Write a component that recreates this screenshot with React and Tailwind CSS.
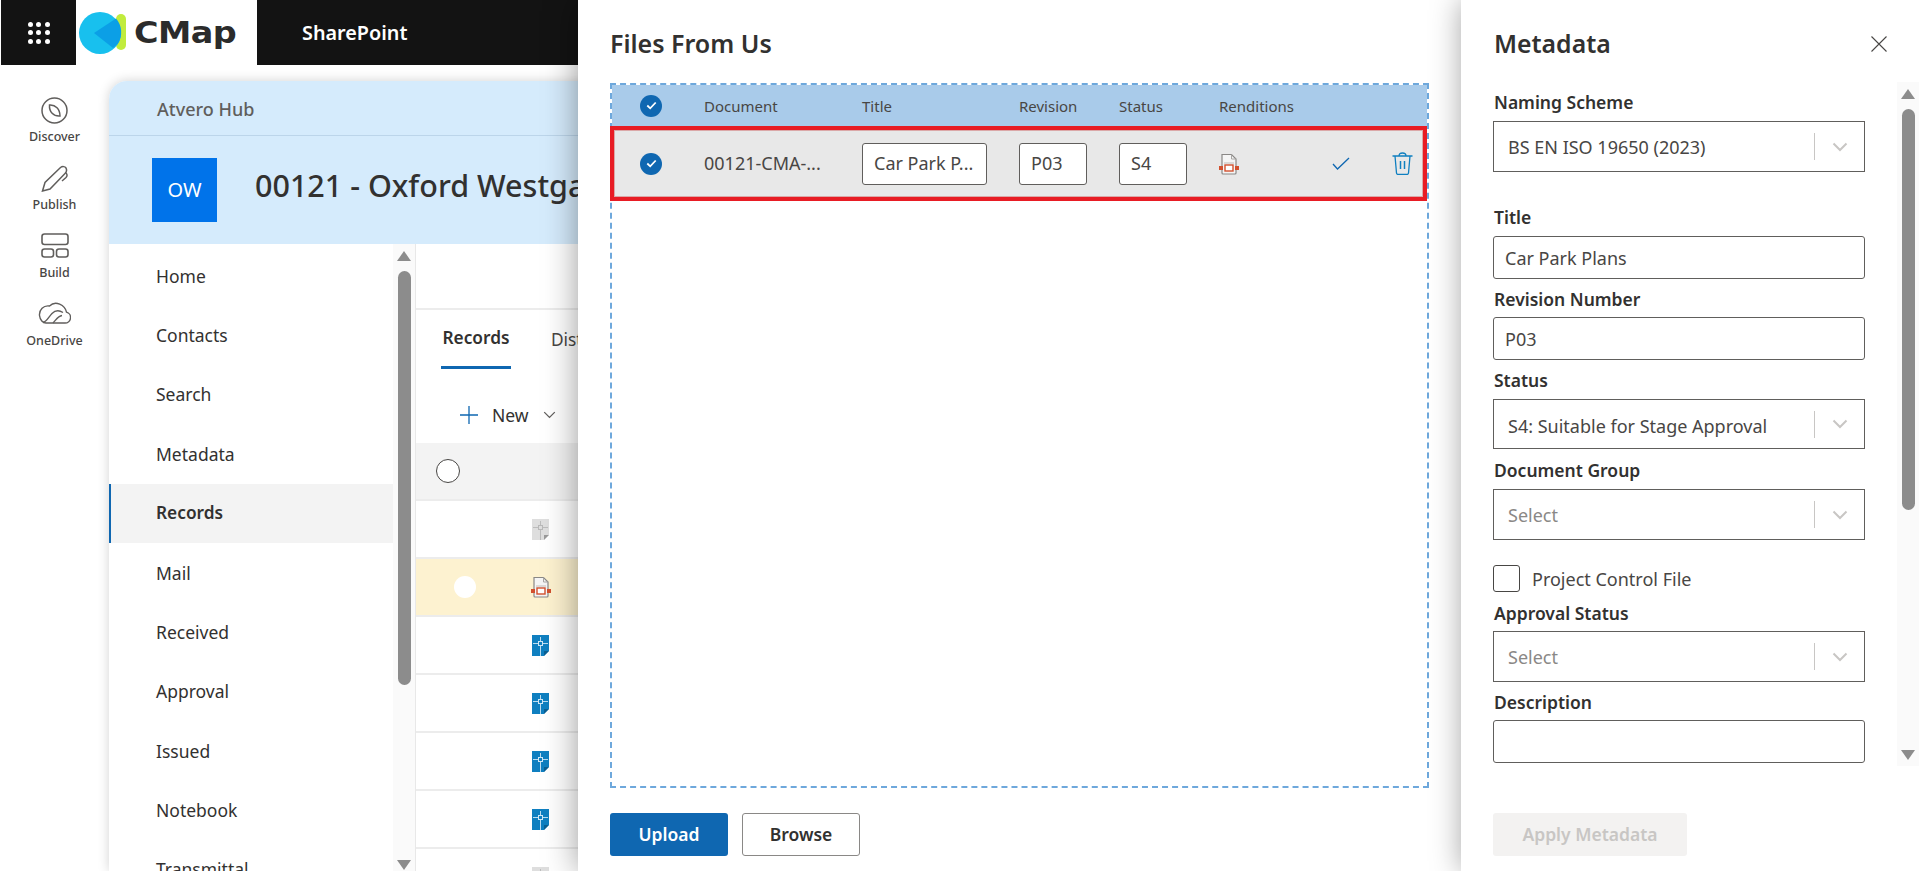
import React from "react";

const FONT = "font-['Noto_Sans','Open_Sans',sans-serif]";

function FileIcon({ tone }) {
  if (tone === "red") {
    return (
      <svg width="20" height="22" viewBox="0 0 20 22" fill="none">
        <path d="M3 1.500h9.500l4.500 4.500v14a1 1 0 0 1-1 1H4a1 1 0 0 1-1-1z" fill="#f5f5f5" stroke="#8a8886" strokeWidth="1.200" />
        <path d="M12.500 1.500v4.500H17" fill="none" stroke="#a8a6a4" strokeWidth="1" />
        <path d="M5 10h10" stroke="#c8c6c4" strokeWidth="1.200" />
        <rect x="0" y="13" width="4" height="4" fill="#d2502e" />
        <rect x="16" y="13" width="4" height="4" fill="#d2502e" />
        <rect x="6" y="12" width="8" height="6" fill="#fff" stroke="#d2502e" strokeWidth="1.400" />
      </svg>
    );
  }
  const bg = tone === "blue" ? "#0f7fc0" : "#dedede";
  const line = tone === "blue" ? "#cfe6f5" : "#b8b8b8";
  return (
    <svg width="17" height="21" viewBox="0 0 17 21" fill="none">
      <path d="M0 0h17v16l-5 5H0z" fill={bg} />
      <path d="M1 8.500h15M8.500 2v19" stroke={line} strokeWidth="0.900" />
      <rect x="6.500" y="6.500" width="4" height="4" fill={bg} stroke={line} strokeWidth="1" />
      <path d="M17 16l-5 5v-5z" fill={tone === "blue" ? "#0b5f92" : "#9a9a9a"} />
      <path d="M17 16.500l-4.500 4.500h4.500z" fill="#ffffff" />
    </svg>
  );
}

function Chevron({ cls = "", color = "#c8c6c4", w = 16, sw = "2" }) {
  return (
    <svg className={cls} width={w} height="10" viewBox="0 0 16 10" fill="none">
      <path d="M1.500 1.500L8 8l6.500-6.500" stroke={color} strokeWidth={sw} />
    </svg>
  );
}

function CheckCircle() {
  return (
    <div className="w-[22px] h-[22px] rounded-full bg-[#0f67b1] flex items-center justify-center">
      <svg width="11" height="9" viewBox="0 0 11 9" fill="none">
        <path d="M1.300 4.500L4.200 7.300L9.700 1.500" stroke="#fff" strokeWidth="1.800" />
      </svg>
    </div>
  );
}

function RailItem({ icon, label }) {
  return (
    <div className="h-[68px] flex flex-col items-center">
      <div className="h-[32px] flex items-start justify-center">{icon}</div>
      <div className="h-[16px] leading-[16px] text-[12.500px] font-medium text-[#484644]">{label}</div>
    </div>
  );
}

const NAV = ["Home", "Contacts", "Search", "Metadata", "Records", "Mail", "Received", "Approval", "Issued", "Notebook", "Transmittal"];
const ROWS = ["gray", "red", "blue", "blue", "blue", "blue", "gray"];

function Label({ h, children }) {
  return (
    <div className={`flex items-center pl-px text-[17.500px] font-semibold text-[#323130] leading-[20px] ${h}`}>{children}</div>
  );
}

function Select({ h, value, placeholder, low }) {
  return (
    <div className={`${h} w-[372px] border-[1.500px] border-[#605e5c] bg-white flex items-center`}>
      <div className={`flex-1 pl-[14px] ${low ? "pt-[4px]" : "pt-[1px]"} text-[18px] ${placeholder ? "text-[#8a8886]" : "text-[#484644]"}`}>{value}</div>
      <div className="h-[27px] w-px bg-[#c8c6c4]"></div>
      <div className="w-[49px] flex items-center justify-center">
        <Chevron />
      </div>
    </div>
  );
}

function TextBox({ value }) {
  return (
    <div className="h-[43px] w-[372px] border-[1.500px] border-[#605e5c] rounded-[3px] bg-white flex items-center pl-[11px] pt-[1px] text-[18px] text-[#484644]">
      {value}
    </div>
  );
}

function ScrollUp({ cls }) {
  return <div className={`w-0 h-0 border-x-[7px] border-x-transparent border-b-[10px] border-b-[#8c8c8c] ${cls}`}></div>;
}
function ScrollDown({ cls }) {
  return <div className={`w-0 h-0 border-x-[7px] border-x-transparent border-t-[10px] border-t-[#8c8c8c] ${cls}`}></div>;
}

export default function App() {
  return (
    <div className={`relative w-[1919px] h-[871px] overflow-hidden bg-white ${FONT} flex flex-col`}>
      {/* top bar */}
      <div className="h-[65px] shrink-0 flex items-stretch pl-px">
        <div className="w-[75px] bg-[#131313] flex items-center justify-center">
          <div className="grid grid-cols-3 gap-[3.500px]">
            {[0, 1, 2, 3, 4, 5, 6, 7, 8].map((i) => (
              <div key={i} className="w-[5px] h-[5px] rounded-full bg-white"></div>
            ))}
          </div>
        </div>
        <div className="w-[181px] bg-white flex items-center pl-[3px]">
          <svg width="50" height="46" viewBox="0 0 50 46" fill="none" className="shrink-0">
            <rect x="37" y="4" width="10" height="36" rx="5" fill="#c1ec3d" />
            <circle cx="21" cy="23" r="21" fill="#18c0ee" />
            <path d="M15 23L37 8.500a21 21 0 0 1 2 25L34 38z" fill="#0b9fe6" />
          </svg>
          <div className="ml-[5px] origin-left scale-x-[1.080] font-['DejaVu_Sans',sans-serif] font-bold text-[31px] tracking-[-0.500px] text-[#2b2b2b]">CMap</div>
        </div>
        <div className="flex-1 bg-[#131313] flex items-center pl-[45px] text-white text-[19.800px] font-semibold">SharePoint</div>
      </div>

      {/* body */}
      <div className="flex-1 flex min-h-0">
        <div className="w-[109px] shrink-0 pt-[32px]">
          <RailItem
            label="Discover"
            icon={
              <svg width="27" height="27" viewBox="0 0 27 27" fill="none" stroke="#605e5c" strokeWidth="1.500">
                <circle cx="13.500" cy="13.500" r="12.500" />
                <path d="M8.500 8c6-.5 10.500 4 10.500 11-6.500.5-11-4-10.500-11z" />
              </svg>
            }
          />
          <RailItem
            label="Publish"
            icon={
              <svg width="28" height="27" viewBox="0 0 28 27" fill="none" stroke="#605e5c" strokeWidth="1.500">
                <path d="M1.500 26L4 17.500 19.500 2.500c2-1.500 4.500-1 5.500.5 1 2 .5 4-1 5.500L9 24z" />
                <path d="M24.500 7.500c2 1.500 2 3.500.5 5L21 16" />
              </svg>
            }
          />
          <RailItem
            label="Build"
            icon={
              <svg width="28" height="25" viewBox="0 0 28 25" fill="none" stroke="#605e5c" strokeWidth="1.600">
                <rect x="1" y="1" width="26" height="10.500" rx="2.500" />
                <rect x="1" y="16" width="11.500" height="8" rx="2.500" />
                <rect x="15.500" y="16" width="11.500" height="8" rx="2.500" />
              </svg>
            }
          />
          <RailItem
            label="OneDrive"
            icon={
              <svg width="33" height="23" viewBox="0 0 33 23" fill="none" stroke="#605e5c" strokeWidth="1.400">
                <path d="M8 22h19a5.500 5.500 0 0 0 1.500-10.800C27 4 17.500-1 11.500 5 5.500 4 1 9 1.500 14.500 2 19 5 22 8 22z" />
                <path d="M5 21.500c4-1 6-6 9-9s7-3.500 11-1" />
                <path d="M15 22c3-3 5-7 9-7.500" />
              </svg>
            }
          />
        </div>

        {/* card */}
        <div className="flex-1 mt-[16px] rounded-tl-[18px] shadow-[0_0_12px_rgba(0,0,0,0.18)] flex flex-col min-w-0">
          <div className="h-[55px] shrink-0 bg-[#d5ebfc] rounded-tl-[18px] border-b border-[#bcd5ea] flex items-center pl-[48px] pt-[2px] text-[18px] font-medium text-[#605e5c]">
            Atvero Hub
          </div>
          <div className="h-[108px] shrink-0 bg-[#d5ebfc] flex items-center pl-[43px]">
            <div className="w-[65px] h-[64px] bg-[#0073ea] text-white text-[20px] flex items-center justify-center">OW</div>
            <div className="ml-[38px] text-[30.500px] font-medium text-[#323130] whitespace-nowrap -mt-[8px]">00121 - Oxford Westgate</div>
          </div>
          <div className="flex-1 flex min-h-0">
            <div className="w-[284px] shrink-0 pt-[2px]">
              {NAV.map((n) => (
                <div
                  key={n}
                  className={
                    n === "Records"
                      ? "h-[59.400px] flex items-center pl-[45px] bg-[#f3f3f3] border-l-2 border-[#0f67b1] text-[17.300px] font-semibold text-[#323130]"
                      : "h-[59.400px] flex items-center pl-[47px] text-[17.500px] text-[#323130]"
                  }
                >
                  {n}
                </div>
              ))}
            </div>
            <div className="w-[22px] shrink-0 bg-[#fafafa] flex flex-col items-center pt-[7px] pb-[1px] border-r border-[#e8e8e8] box-content">
              <ScrollUp cls="shrink-0" />
              <div className="w-[13px] h-[414px] mt-[10px] rounded-full bg-[#8c8c8c] shrink-0"></div>
              <div className="flex-1"></div>
              <ScrollDown cls="shrink-0" />
            </div>
            <div className="flex-1 min-w-0 flex flex-col">
              <div className="h-[66px] shrink-0 border-b-2 border-[#ececec]"></div>
              <div className="h-[59px] shrink-0 flex pl-[25px] text-[17.300px]">
                <div className="w-[70px] h-[59px] border-b-[3px] border-[#0f67b1] flex items-center justify-center font-semibold text-[#323130]">Records</div>
                <div className="ml-[40px] h-[59px] flex items-center text-[#484644]">Distribution</div>
              </div>
              <div className="h-[74px] shrink-0 flex items-center pl-[44px] pt-[18px] text-[17.500px] text-[#323130]">
                <svg width="18" height="18" viewBox="0 0 18 18" fill="none" stroke="#0f67b1" strokeWidth="1.300">
                  <path d="M9 0v18M0 9h18" />
                </svg>
                <span className="ml-[14px]">New</span>
                <Chevron cls="ml-[14px]" color="#605e5c" w={13} sw="1.600" />
              </div>
              <div className="h-[58px] shrink-0 bg-[#f3f3f3] border-b-2 border-[#ececec] flex items-center pl-[20px]">
                <div className="w-[24px] h-[24px] rounded-full border-[1.500px] border-[#484644] bg-white"></div>
              </div>
              {ROWS.map((t, i) => (
                <div
                  key={i}
                  className={`h-[58px] shrink-0 border-b-2 border-[#ececec] flex items-center ${t === "red" ? "bg-[#fdf2d0]" : "bg-white"}`}
                >
                  {t === "red" ? <div className="ml-[38px] w-[22px] h-[22px] rounded-full bg-white shrink-0"></div> : <div className="ml-[60px]"></div>}
                  <div className={t === "red" ? "ml-[55px]" : "ml-[56px]"}>
                    <FileIcon tone={t} />
                  </div>
                </div>
              ))}
            </div>
          </div>
        </div>
      </div>

      {/* sliding panels */}
      <div className="absolute top-0 right-0 bottom-0 flex">
        <div className="w-[883px] bg-white shadow-[0_0_32px_rgba(0,0,0,0.4)] pl-[32px] flex flex-col">
          <div className="h-[83px] shrink-0 flex items-start pt-[26px] leading-[34px] text-[25px] font-semibold text-[#323130]">Files From Us</div>
          <div className="w-[819px] h-[705px] shrink-0 border-2 border-dashed border-[#6ea8dc]">
            <div className="h-[41px] bg-[#a9cbea] flex items-center text-[15px] text-[#484644]">
              <div className="w-[92px] pl-[28px]">
                <CheckCircle />
              </div>
              <div className="w-[158px] pt-[1px]">Document</div>
              <div className="w-[157px] pt-[1px]">Title</div>
              <div className="w-[100px] pt-[1px]">Revision</div>
              <div className="w-[100px] pt-[1px]">Status</div>
              <div className="pt-[1px]">Renditions</div>
            </div>
            <div className="-ml-[2px] w-[817px] h-[75px] border-4 border-[#e81c24] bg-[#e8e8e8] shadow-[inset_0_0_0_1px_#dba8a8] flex items-center text-[18px] text-[#484644]">
              <div className="w-[90px] pl-[26px]"><CheckCircle /></div>
              <div className="w-[158px] whitespace-nowrap">00121-CMA-...</div>
              <div className="w-[157px]">
                <div className="w-[125px] h-[42px] bg-white border-[1.500px] border-[#605e5c] rounded-[3px] flex items-center pl-[11px] whitespace-nowrap overflow-hidden">Car Park P...</div>
              </div>
              <div className="w-[100px]">
                <div className="w-[68px] h-[42px] bg-white border-[1.500px] border-[#605e5c] rounded-[3px] flex items-center pl-[11px]">P03</div>
              </div>
              <div className="w-[100px]">
                <div className="w-[68px] h-[42px] bg-white border-[1.500px] border-[#605e5c] rounded-[3px] flex items-center pl-[11px]">S4</div>
              </div>
              <div className="w-[112px]"><FileIcon tone="red" /></div>
              <div className="w-[20px] flex justify-center">
                <svg width="18" height="13" viewBox="0 0 18 13" fill="none" stroke="#0f67b1" strokeWidth="1.300">
                  <path d="M1 7l4.500 5L17 1" />
                </svg>
              </div>
              <div className="ml-[41px]">
                <svg width="21" height="23" viewBox="0 0 21 23" fill="none" stroke="#0f7fc0" strokeWidth="1.300">
                  <path d="M0.500 4h20M7 4c0-2 1-3 3.500-3S14 2 14 4M3 4l1.500 17c.1 1 1 1.500 2 1.500h8c1 0 1.900-.5 2-1.500L18 4" />
                  <path d="M8.500 9v8M12.500 9v8" strokeWidth="1.500" />
                </svg>
              </div>
            </div>
          </div>
          <div className="flex gap-[14px] mt-[25px] text-[17.500px] font-semibold">
            <div className="w-[118px] h-[43px] bg-[#0f67b1] rounded-[3px] text-white flex items-center justify-center">Upload</div>
            <div className="w-[118px] h-[43px] bg-white border border-[#8a8886] rounded-[3px] text-[#323130] flex items-center justify-center">Browse</div>
          </div>
        </div>

        <div className="w-[458px] bg-white shadow-[0_0_28px_rgba(0,0,0,0.35)] flex flex-col pl-[32px]">
          <div className="h-[82px] shrink-0 flex items-start pt-[26px] justify-between pr-[32px]">
            <div className="pl-px leading-[34px] text-[24.800px] font-semibold text-[#323130]">Metadata</div>
            <svg className="mt-[10px]" width="16" height="16" viewBox="0 0 16 16" fill="none" stroke="#484644" strokeWidth="1.100">
              <path d="M0.500 0.500l15 15M15.500 0.500l-15 15" />
            </svg>
          </div>
          <div className="h-[684px] shrink-0 flex">
            <div className="w-[404px] shrink-0">
              <Label h="h-[39px]">Naming Scheme</Label>
              <Select h="h-[51px]" value="BS EN ISO 19650 (2023)" />
              <Label h="h-[64px] pt-[26px]">Title</Label>
              <TextBox value="Car Park Plans" />
              <Label h="h-[38px] pt-[2px]">Revision Number</Label>
              <TextBox value="P03" />
              <Label h="h-[39px] pt-[1px]">Status</Label>
              <Select h="h-[50px]" value="S4: Suitable for Stage Approval" low />
              <Label h="h-[40px] pt-[2px]">Document Group</Label>
              <Select h="h-[51px]" value="Select" placeholder />
              <div className="flex items-center mt-[25px] h-[27px]">
                <div className="w-[27px] h-[27px] border-[1.500px] border-[#484644] rounded-[3px] bg-white"></div>
                <div className="ml-[12px] pt-[2px] text-[18px] text-[#484644]">Project Control File</div>
              </div>
              <Label h="h-[39px] pt-[2px]">Approval Status</Label>
              <Select h="h-[51px]" value="Select" placeholder />
              <Label h="h-[38px] pt-[2px]">Description</Label>
              <TextBox value="" />
            </div>
            <div className="w-[22px] shrink-0 bg-[#fafafa] flex flex-col items-center pt-[7px] pb-[6px]">
              <ScrollUp cls="shrink-0" />
              <div className="w-[13px] h-[401px] mt-[10px] rounded-full bg-[#8c8c8c] shrink-0"></div>
              <div className="flex-1"></div>
              <ScrollDown cls="shrink-0" />
            </div>
          </div>
          <div className="mt-[47px] w-[194px] h-[43px] bg-[#f3f2f1] rounded-[3px] text-[#c8c6c4] text-[17.500px] font-semibold flex items-center justify-center">Apply Metadata</div>
        </div>
      </div>
    </div>
  );
}
